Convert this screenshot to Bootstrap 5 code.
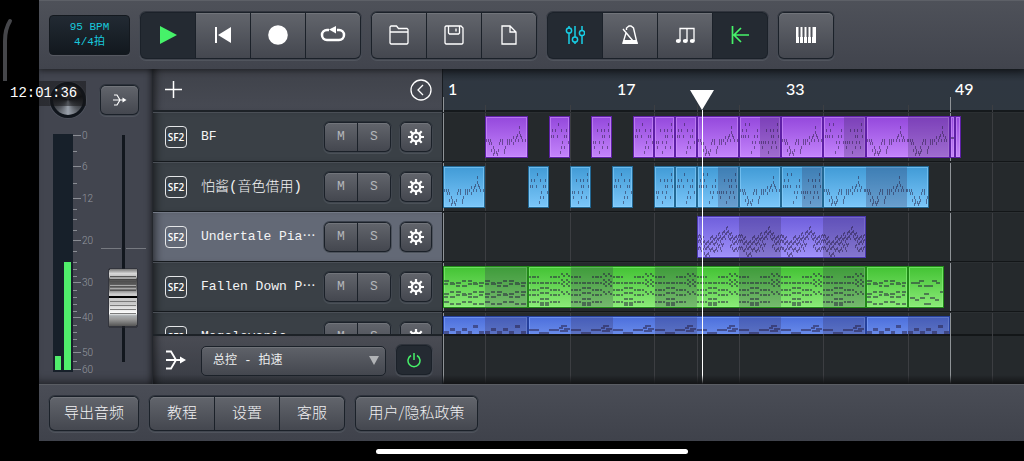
<!DOCTYPE html>
<html lang="zh-CN">
<head>
<meta charset="utf-8">
<meta name="viewport" content="width=device-width, initial-scale=1">
<title>Studio</title>
<link href="https://cdn.jsdelivr.net/npm/bootstrap@5.3.0/dist/css/bootstrap.min.css" rel="stylesheet">
<style>
:root{--edge:#1b2129;--cjk:"Noto Sans CJK SC",sans-serif;--mono:"Liberation Mono","Noto Sans CJK SC",monospace}
body{background:#000;color:#fff;font-family:var(--cjk);font-weight:300}
.app{margin-left:39px;height:100vh;min-height:400px}
.bar-top{height:69px;padding:0 10px;gap:10px;background:linear-gradient(#4e5159,#41444d);border-top:1px solid #5d6067;position:relative;z-index:3;box-shadow:0 2px 6px rgba(0,0,0,.45)}
.lcd{width:81px;height:40px;border:1px solid #14191f;border-radius:4px;background:linear-gradient(#222a33,#12181e);color:#18c8dc;font:11px/15px var(--mono);text-align:center;box-shadow:0 1px 0 #555860;padding:0}
.seg{display:flex;gap:1px;padding:1px;background:var(--edge);border-radius:6px;box-shadow:0 1px 0 1px rgba(110,114,124,.35),0 0 0 1px rgba(27,33,41,.55);flex:none}
.seg>.btn{--bs-btn-border-width:0;--bs-btn-padding-x:0;--bs-btn-padding-y:0;border-radius:0;color:#fff;background:linear-gradient(#62656c,#44474f);box-shadow:inset 0 1px 0 #71747a;display:flex;align-items:center;justify-content:center;font-weight:300}
.seg>.btn:first-child{border-top-left-radius:5px;border-bottom-left-radius:5px}
.seg>.btn:last-child{border-top-right-radius:5px;border-bottom-right-radius:5px}
.seg>.btn.on{background:#242a32;box-shadow:none}
.seg>.btn.cy{color:#18cfe6}
.seg>.btn.gr{color:#46f269}
.seg-tool>.btn{width:54px;height:45px}
.seg-mini>.btn{width:32px;height:28px;font:13px/28px var(--mono);color:#b4b6ba}
.seg-gear>.btn{width:30px;height:28px}
.seg-foot>.btn{height:33px;font-size:15px;line-height:30px;padding-bottom:3px;color:#f1f1f3}
.w-export>.btn{width:88px}.w-three>.btn{width:64px}.w-policy>.btn{width:121px}
svg{display:block;flex:none}
.ln{fill:none;stroke:currentColor}
.mixer{width:114px;background:#42454f;box-shadow:inset -4px 0 6px -3px rgba(0,0,0,.5),inset 0 -8px 8px -5px rgba(0,0,0,.4);border-right:1px solid #24272d;padding-top:12px}
.mixer-head{height:38px;margin-bottom:6px;padding:0 13px 0 11px}
.knob{width:36px;height:36px;border-radius:50%;border:3px solid #10151c;background:conic-gradient(#17191d,#42454b 25deg,#111316 75deg,#555960 135deg,#9aa1ab 180deg,#555960 225deg,#111316 285deg,#42454b 335deg,#17191d);box-shadow:0 0 0 1px #4d515b}
.seg-bus>.btn{width:37px;height:28px}
.tracks{width:290px;background:#43464e;border-right:1px solid #171b20}
.shade{box-shadow:inset 8px 0 8px -6px rgba(0,0,0,.6)}
.thead-bar{height:43px;padding:0 10px 0 12px;background:linear-gradient(#3f424a,#474a53);border-bottom:2px solid #1d2227}
.rowlist{flex:1 1 0;min-height:0;overflow:hidden}
.trk{height:50px;padding:0 10px 0 12px;background:#3a4046;border-bottom:1px solid #15191d;border-top:1px solid #4a4f56}
.trk.sel{background:#636976;border-top-color:#737986}
.sf{width:22px;height:22px;border:1px solid #e4e6e8;border-radius:4px;font:600 10px/20px "Open Sans",sans-serif;text-align:center;flex:none;margin-right:14px}
.tname{font:13px/20px var(--mono);color:#f4f4f5;width:123px;white-space:nowrap;flex:none}
.tname.zh{font-size:14px;font-weight:300}
.tfoot-bar{height:50px;padding:0 10px 0 12px;background:linear-gradient(#4a4c54,#3c3f47 80%,#24272c);border-top:2px solid #1d2227}
.send{margin-right:14px}
.pick{position:relative;width:185px}
.pick select{appearance:none;width:100%;height:30px;border:1px solid var(--edge);border-radius:5px;background:linear-gradient(#5f6269,#44474f);color:#eceded;font:12px/26px var(--mono);padding:0 0 0 11px;box-shadow:inset 0 1px 0 #6f7278}
.pick svg{position:absolute;right:7px;top:11px;pointer-events:none}
.seg-pow>.btn{width:34px;height:28px}
.time{background:#25292c;position:relative;overflow:hidden;min-width:0}
.time:after{content:"";position:absolute;left:0;right:0;bottom:0;height:9px;background:linear-gradient(transparent,#131416)}
.ruler{height:43px;background:linear-gradient(#20262d,#2f3741 30%,#2f3740);border-bottom:2px solid #15191c;position:relative}
.ruler span{position:absolute;top:9px;padding-left:5px;font:500 16px/22px Lato,sans-serif}
.vline{position:absolute;top:36px;bottom:0;width:1px;background:#3c3e42}
.vline.major{top:28px;background:#8f9397}
.lane{height:50px;border-bottom:1px solid #131618;border-top:1px solid #2b2f32;position:relative}
.tail{height:50px;border-top:2px solid #131618}
.clip{position:absolute;top:3px;height:42px;border:1px solid var(--d);background:linear-gradient(var(--a),var(--b));box-shadow:inset 0 0 0 1px var(--h);overflow:hidden}
.clip i{position:absolute;top:0;bottom:0;background:rgba(50,40,80,.25)}
.clip svg{position:absolute;left:0;top:0;width:100%;height:40px}
.c-vio{--a:#9448dc;--b:#c484fb;--d:#5e1fa6;--h:rgba(215,160,255,.5)}
.c-sky{--a:#419bd6;--b:#7bc6f9;--d:#236894;--h:rgba(150,215,255,.5)}
.c-ind{--a:#6f5fdc;--b:#a091fa;--d:#4a37b0;--h:rgba(170,160,255,.45)}
.c-grn{--a:#43c334;--b:#8bea78;--d:#218a18;--h:rgba(150,250,140,.5)}
.c-blu{--a:#4c6fdc;--b:#8fb0fb;--d:#25409c;--h:rgba(130,165,250,.6)}
.head{position:absolute;top:21px;bottom:0;width:24px;margin-left:-12px;left:44.6%}
.head:after{content:"";position:absolute;left:12px;top:20px;bottom:0;width:1px;background:#fff}
.bar-bot{height:57px;padding:0 10px;gap:10px;background:linear-gradient(#4a4d56,#3f424b);border-top:1px solid #5a5d63}
.homebar{height:20px}
.homebar div{width:312px;height:5px;border-radius:3px;background:#fff}
.clock{position:absolute;left:0;top:81px;width:86px;height:25px;padding-left:10px;background:linear-gradient(90deg,#000 39px,rgba(20,20,22,.5) 39px);font:14px/24px var(--mono);z-index:5}
.curve{position:absolute;left:0;top:17px;z-index:5}
</style>
</head>
<body>
<svg class="curve" width="14" height="68"><path d="M10 4Q5 12 5 24V64" fill="none" stroke="#45464a" stroke-width="4" stroke-linecap="round"/></svg>
<div class="clock">12:01:36</div>

<div class="app d-flex flex-column">
  <header class="bar-top d-flex align-items-center">
    <button class="lcd">95 BPM<br>4/4拍</button>
    <div class="seg seg-tool">
      <button class="btn on gr" aria-label="播放"><svg width="20" height="20"><path d="M2 1L19 10L2 19Z" fill="#46f269"/></svg></button>
      <button class="btn" aria-label="回到开头"><svg width="18" height="18"><path d="M1 1H3V17H1ZM17 1V17L4 9Z" fill="#fff"/></svg></button>
      <button class="btn" aria-label="录音"><svg width="20" height="20"><circle cx="10" cy="10" r="9.800" fill="#fff"/></svg></button>
      <button class="btn" aria-label="循环"><svg width="26" height="20"><path d="M9 5H7A5 5 0 0 0 7 15H19A5 5 0 0 0 19 5H17" fill="none" stroke="#fff" stroke-width="2.500"/><path d="M9 4.500L16 1V8.500Z" fill="#fff"/></svg></button>
    </div>
    <div class="seg seg-tool">
      <button class="btn" aria-label="打开"><svg width="20" height="20" class="ln" stroke-width="1.300"><path d="M1 18V2L2 1H7.500L9.500 3.500H18L19 4.500V18L18 19H2ZM1 7H19"/></svg></button>
      <button class="btn" aria-label="保存"><svg width="20" height="20" class="ln" stroke-width="1.300"><path d="M1 2L2 1H17L19 3V18L18 19H2L1 18ZM4.500 1V8L5.500 9H14.500L15.500 8V1M12 3.500V6.500"/></svg></button>
      <button class="btn" aria-label="新建"><svg width="16" height="20" class="ln" stroke-width="1.300"><path d="M1 1H9L15 7V19H1ZM9 1V7H15"/></svg></button>
    </div>
    <div class="seg seg-tool">
      <button class="btn on cy" aria-label="混音器"><svg width="20" height="20" class="ln" stroke-width="1.500"><path d="M4 1V3M4 8V19M10 1V12M10 17V19M17 1V5.500M17 10.500V19"/><circle cx="4" cy="5.500" r="2.600"/><circle cx="10" cy="14.500" r="2.600"/><circle cx="17" cy="8" r="2.600"/></svg></button>
      <button class="btn" aria-label="节拍器"><svg width="18" height="20" class="ln" stroke-width="1.400"><path d="M5 8L2 18H16L12.500 3L10 1H8L5.500 3V5M2 4L12 16"/><path d="M3 15H15.500L17 19H1.500Z" fill="#fff" stroke="none"/></svg></button>
      <button class="btn" aria-label="音符"><svg width="21" height="18" class="ln" stroke-width="1.300"><path d="M5 15V2.500H19V15M12 2.500V15"/><g fill="#fff" stroke="none"><ellipse cx="3.300" cy="15" rx="2.500" ry="1.900"/><ellipse cx="10.300" cy="15" rx="2.500" ry="1.900"/><ellipse cx="17.300" cy="15" rx="2.500" ry="1.900"/></g></svg></button>
      <button class="btn on gr" aria-label="跟随"><svg width="18" height="20" class="ln" stroke-width="1.700"><path d="M1.500 1V19M3 10H18M10 3L3 10L10 17"/></svg></button>
    </div>
    <div class="seg seg-tool">
      <button class="btn" aria-label="键盘"><svg width="20" height="18"><path d="M0 1H20V17H0Z" fill="#fff"/><path d="M3.500 1V17M7.500 1V17M11.500 1V17M15.500 1V17" stroke="#50535a" stroke-width="1"/><path d="M3.500 1V11M7.500 1V11M11.500 1V11M15.500 1V11" stroke="#50535a" stroke-width="2"/></svg></button>
    </div>
  </header>

  <main class="d-flex flex-fill overflow-hidden">
    <section class="mixer flex-shrink-0 overflow-hidden">
      <div class="mixer-head d-flex align-items-center justify-content-between">
        <div class="knob" role="img" aria-label="声像"></div>
        <div class="seg seg-bus"><button class="btn" aria-label="输出"><svg width="14" height="14" class="ln" stroke-width="1.200"><path d="M1 2H4L7 7M1 12H4L7 7M0 7H12"/><path d="M9.500 4.500L13.500 7L9.500 9.500Z" fill="#fff" stroke="none"/></svg></button></div>
      </div>
      <svg id="meter" width="113" height="250" viewBox="39 125 113 250" font-family="Roboto,sans-serif" font-size="10" fill="#9699a0" shape-rendering="crispEdges">
        <defs><linearGradient id="cap" x2="0" y2="1"><stop offset="0" stop-color="#777"/><stop offset=".08" stop-color="#d8d8d8"/><stop offset=".14" stop-color="#bbb"/><stop offset=".18" stop-color="#444"/><stop offset=".36" stop-color="#777"/><stop offset=".44" stop-color="#ccc"/><stop offset=".6" stop-color="#c8c8c8"/><stop offset=".78" stop-color="#fff"/><stop offset=".82" stop-color="#a9adb0"/><stop offset=".88" stop-color="#999"/><stop offset="1" stop-color="#555"/></linearGradient></defs>
        <rect x="53" y="134" width="20" height="238" fill="#17202a"/>
        <rect x="55" y="356" width="6" height="14" fill="#50ee6b"/>
        <rect x="64" y="262" width="7" height="108" fill="#50ee6b"/>
        <rect x="122" y="135" width="3" height="227" fill="#12171e"/>
        <path d="M101 248.500H121M126 248.500H146" stroke="#767980"/>
        <rect x="108" y="268" width="30" height="60" rx="3" fill="#23262c" opacity=".5"/>
        <rect x="109" y="269" width="28" height="57" rx="2" fill="url(#cap)"/>
        <path d="M110 276.500H136M110 280.500H136M110 283.500H136M110 286.500H136M110 290.500H136" stroke="#555"/>
        <path d="M110 278.500H136M110 285.500H136M110 288.500H136" stroke="#a8a8a8"/>
        <path d="M110 301.500H136M110 305.500H136M110 309.500H136M110 313.500H136" stroke="#7b7b7b"/>
        <path d="M109 297H137" stroke="#000" stroke-width="2"/>
      </svg>
    </section>

    <section class="tracks d-flex flex-column flex-shrink-0">
      <div class="thead-bar shade d-flex align-items-center justify-content-between">
        <button class="btn p-0 border-0 text-white" aria-label="添加轨道"><svg width="17" height="17" class="ln" stroke-width="1.500"><path d="M8.500 0V17M0 8.500H17"/></svg></button>
        <button class="btn p-0 border-0 text-white" aria-label="收起"><svg width="22" height="22" class="ln" stroke-width="1.300"><circle cx="11" cy="11" r="10"/><path d="M13 6L8 11L13 16"/></svg></button>
      </div>
      <div class="rowlist" id="rows"></div>
      <div class="tfoot-bar shade d-flex align-items-center">
        <svg width="22" height="20" class="ln send" stroke-width="1.800"><path d="M1 1.500H6L11 10M1 18.500H6L11 10M1 10H16"/><path d="M15 6.500L21 10L15 13.500Z" fill="#fff" stroke="none"/></svg>
        <div class="pick"><select aria-label="自动化参数"><option>总控 - 拍速</option></select><svg width="10" height="9"><path d="M0 0H10L5 9Z" fill="#b1b3b6"/></svg></div>
        <div class="seg seg-pow ms-auto"><button class="btn on gr" aria-label="开关"><svg width="14" height="16" class="ln" stroke-width="1.500"><path d="M4 3.500A6 6 0 1 0 10 3.500M7 1V8"/></svg></button></div>
      </div>
    </section>

    <section class="time flex-grow-1 d-flex flex-column">
      <div class="ruler flex-shrink-0" id="ruler"></div>
      <div class="rowlist" id="lanes"></div>
      <div class="tail flex-shrink-0"></div>
      <div class="head"><svg width="24" height="20"><path d="M0 0H24L12 20Z" fill="#fff"/></svg></div>
    </section>
  </main>

  <footer class="bar-bot d-flex align-items-center flex-shrink-0">
    <div class="seg seg-foot w-export"><button class="btn">导出音频</button></div>
    <div class="seg seg-foot w-three"><button class="btn">教程</button><button class="btn">设置</button><button class="btn">客服</button></div>
    <div class="seg seg-foot w-policy"><button class="btn">用户/隐私政策</button></div>
  </footer>
  <div class="homebar d-flex align-items-center justify-content-center flex-shrink-0"><div></div></div>
</div>

<script>
// level scale of the channel meter
const marks = [[0,136],[6,167],[12,199],[20,241],[30,283],[40,318],[50,353],[60,370]];
let ticks = '';
marks.forEach(([v,y]) => ticks += `<path d="M73 ${y-.5}h8" stroke="#8a8d94"/><text x="82" y="${y+3}">${v}</text>`);
[151,183,209,219,230,251,262,269,276,290,297,304,311,325,332,339,346,361].forEach(y => ticks += `<path d="M73 ${y+.5}h4" stroke="#8a8d94"/>`);
document.getElementById('meter').insertAdjacentHTML('beforeend', ticks);

// track list
const gear = '<svg width="18" height="18" viewBox="-9 -9 18 18"><g stroke="#fff" stroke-width="2.200"><path d="M0-8V-4M0 8V4M-8 0H-4M8 0H4M-5.700-5.700L-3-3M5.700 5.700L3 3M-5.700 5.700L-3 3M5.700-5.700L3-3"/></g><circle r="4.300" fill="none" stroke="#fff" stroke-width="2.200"/><circle r="1.300" fill="#fff"/></svg>';
const names = ['BF','怕酱(音色借用)','Undertale Pia⋯','Fallen Down P⋯','Megalovania'];
document.getElementById('rows').innerHTML = names.map((n,i) => `
  <div class="trk shade d-flex align-items-center ${i==2?'sel':''}">
    <div class="sf">SF2</div><div class="tname ${i==1?'zh':''}">${n}</div>
    <div class="seg seg-mini"><button class="btn">M</button><button class="btn">S</button></div>
    <div class="seg seg-gear ms-auto"><button class="btn" aria-label="设置">${gear}</button></div>
  </div>`).join('');

// arrangement: the window shows 55 bars
const SPAN = 55, PX = 10.5, pct = b => (b/SPAN*100).toFixed(3)+'%';
const ruler = document.getElementById('ruler');
ruler.innerHTML = [1,17,33,49].map(b => `<span style="left:${pct(b-1)}">${b}</span>`).join('');
ruler.insertAdjacentHTML('afterend', [0,4,12,20,24,28,36,44,48,52].map(b => `<div class="vline ${b%48==0?'major':''}" style="left:${pct(b)}"></div>`).join(''));

// notes as [x, y, width, height]
const expand = (o,w=1,h=3) => Object.entries(o).flatMap(([y,xs]) => xs.map(x => [x,+y,w,h]));
const A = expand({9:[34],14:[34],17:[32,35],19:[28,31,37],22:[0,2,4,15,17,22,24,26,30,33,36,38,41],25:[3,5,14,17,22,24,28],29:[7,12,20],32:[5,8,13,19],34:[8,10,12,19],36:[7,11]});
const B = expand({6:[5,9],12:[2,6,12,18],18:[1,3,5,8,15,18],24:[13,16,20],29:[12,15],34:[11]});
const C = expand({6:[18],12:[6,10,13,18],18:[11,13,19],24:[1,3,5,8,12,16],29:[2,11,17],34:[8]});
const D = B.concat(C.map(([x,y,w,h]) => [x+21,y,w,h]));
const I = [];
const contour = [0,0,2,5,7,5,2,0,3,0,-2,0,-3,-5,-8,-5,-2,0,2,0,0];
contour.forEach((c,k) => [18,23,30].forEach((y,r) => { if (r==2 && c<-3) return; I.push([k*2,y+c,1,3],[k*2+1,y+c+(k%2?3:-1),1,2]); }));
const G = [];
[[9,15,22,27,34],[15,20,25,31,35,37],[9,15,22,27,34],[6,12,16,24]].forEach((ys,s) => ys.forEach(y => { for(let k=0;k<4;k++){ G.push([s*10.5+k*2.6,y+(s==3&&k%2?2:0),2,2]); } }));
const G2 = [];
[13,16,24,27,34].forEach((y,r) => { for(let k=0;k<7;k++) G2.push([k*6,y+((k*3+r)%4>1?2:0),5-(k+r)%2,2]); });
const G3 = expand({9:[38],13:[11,24],15:[2,7,28],18:[9,16,20],24:[33],26:[16],30:[1,12,22],32:[6,27],36:[16,18]},5,2);
const L = []; for(let k=0;k<7;k++) L.push([k*6,k==5?8:k%2?11:14,5,3]);
const M = [[0,12,10,2],[10,15,10,2],[20,12,10,2],[30,10,4,2],[32,8,6,2],[35,11,6,2],[31,13,8,2]];

// clips as [first bar, end bar, notes, bars where a darker repeat starts]
const lanes = [
 ['vio',[[4,8,A],[10,12,B],[14,16,C],[18,20,B],[20,22,C],[22,24,B],[24,28,A],[28,32,D,[30]],[32,36,A],[36,40,D,[38]],[40,48,A,[44]],[48,48.5,[[0,20,6,2]]],[48.5,49,[]]]],
 ['sky',[[0,4,A],[8,10,B],[12,14,C],[16,18,B],[20,22,C],[22,24,B],[24,28,D,[26]],[28,32,A],[32,36,D,[34]],[36,46,A,[40]]]],
 ['ind',[[24,40,I,[28,36]]]],
 ['grn',[[0,8,G2,[4]],[8,40,G,[12,20,28,36]],[40,44,G2],[44,47.4,G3]]],
 ['blu',[[0,8,L,[4]],[8,40,M,[12,20,28,36]],[40,48,L,[44]]]]
];
document.getElementById('lanes').innerHTML = lanes.map(([c,clips]) => '<div class="lane">' + clips.map(([s,e,p,sh=[]]) => {
  const w = (e-s)*PX; let d = '';
  for (let o=0;o<w;o+=42) p.forEach(([x,y,a,h]) => { if (x+o<w) d += `M${Math.round(x+o)} ${y}h${a}v${h}h-${a}z`; });
  const len = p===D ? 2 : 4;
  const shades = sh.map(b => `<i style="left:${((b-s)/(e-s)*100).toFixed(2)}%;width:${(len/(e-s)*100).toFixed(2)}%"></i>`).join('');
  return `<div class="clip c-${c}" style="left:${pct(s)};width:${pct(e-s)}">${shades}<svg viewBox="0 0 ${w} 40" preserveAspectRatio="none" shape-rendering="crispEdges"><path d="${d}" fill="rgba(35,25,60,.5)"/></svg></div>`;
}).join('') + '</div>').join('');
</script>
<script src="https://cdn.jsdelivr.net/npm/bootstrap@5.3.0/dist/js/bootstrap.bundle.min.js"></script>
</body>
</html>
